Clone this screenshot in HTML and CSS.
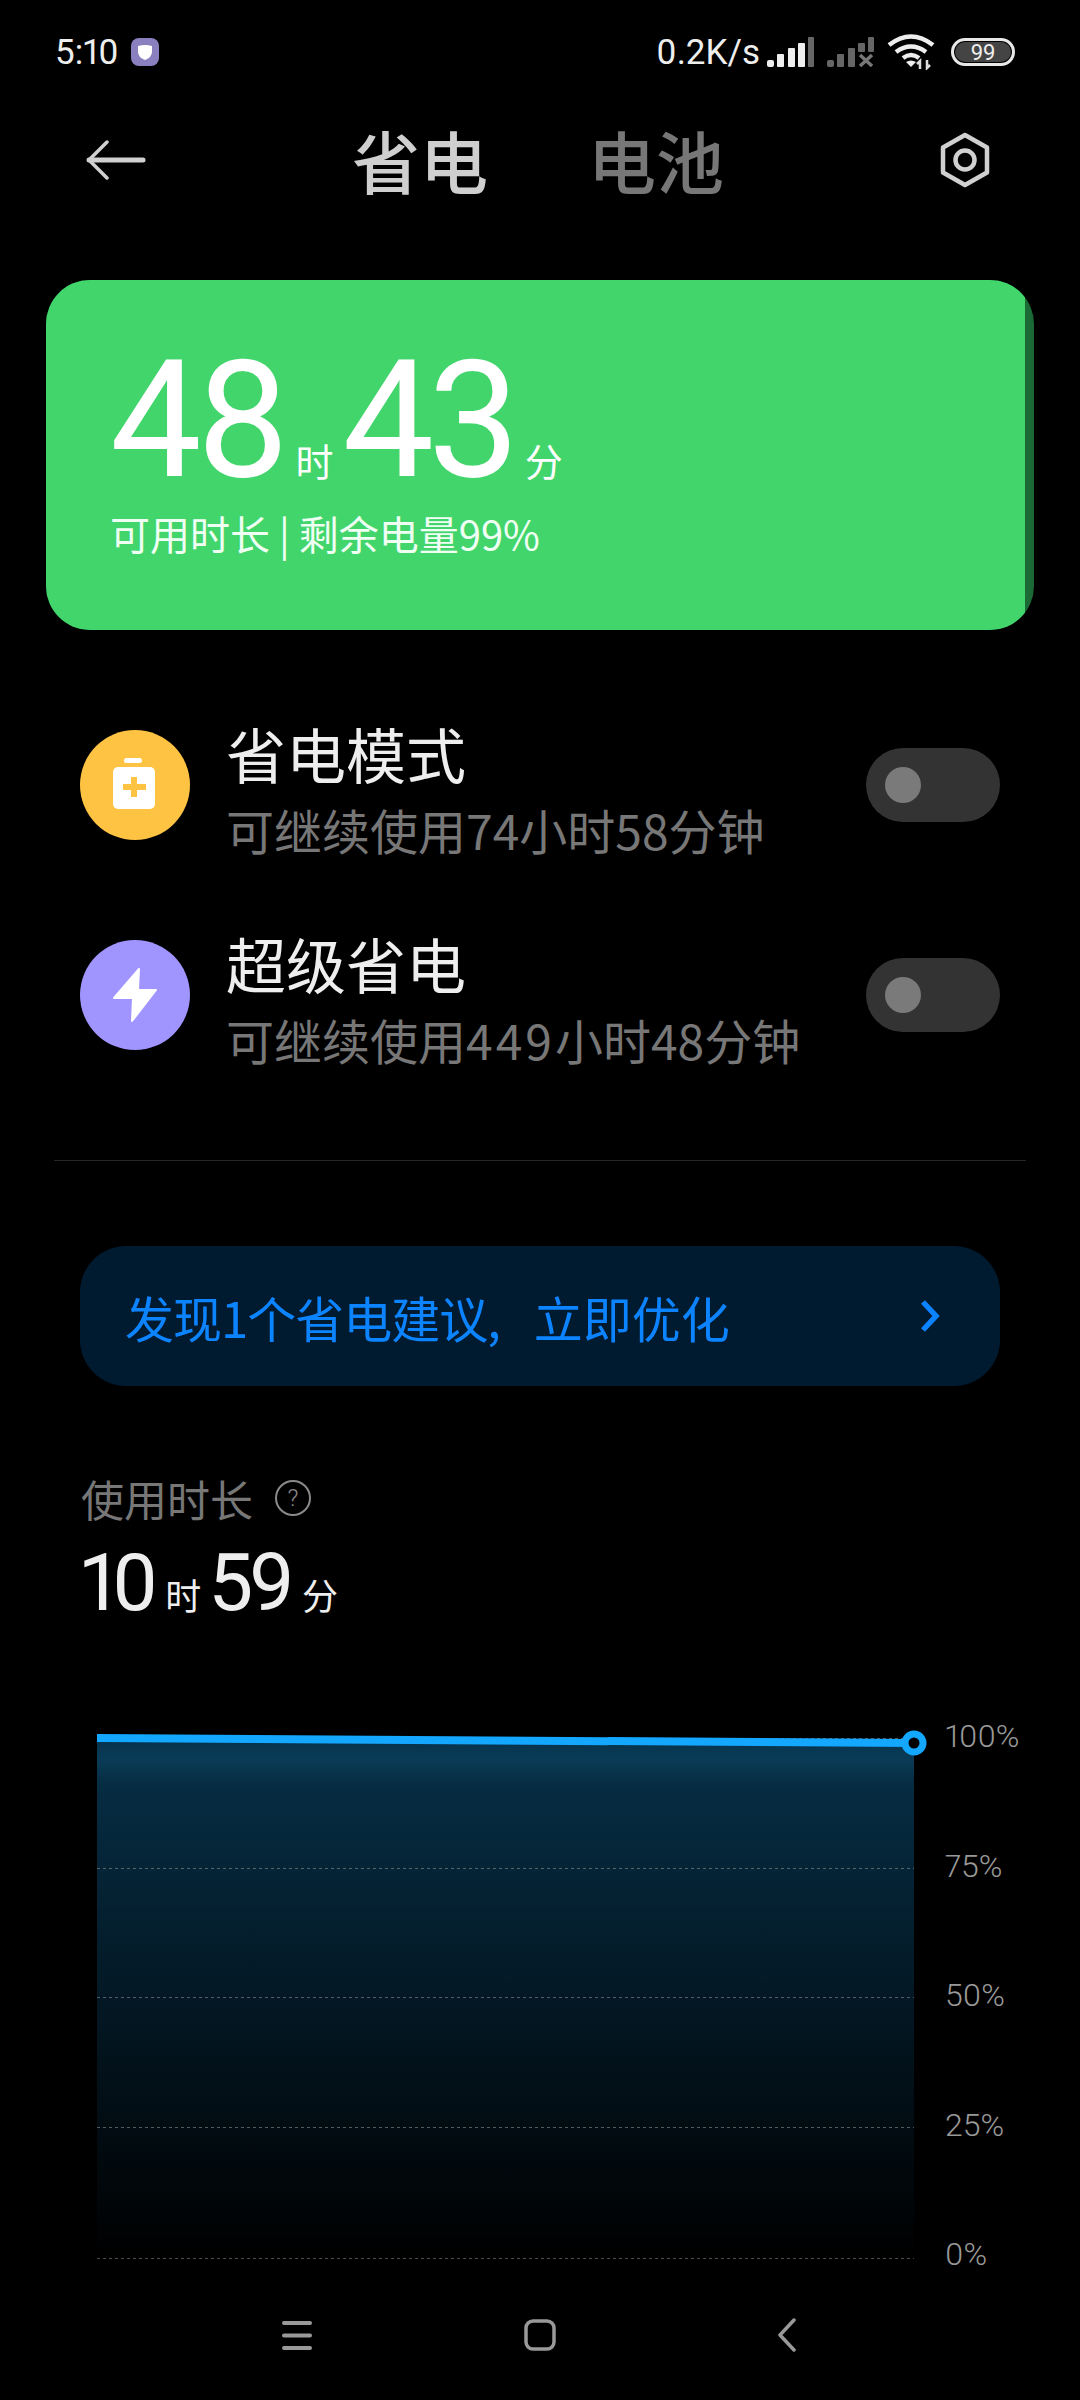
FILE: index.html
```html
<!DOCTYPE html>
<html lang="zh">
<head>
    <title>省电</title>
    <link rel="stylesheet" href="styles.css">
</head>
<body>
    <div class="status-bar">
        <div class="status-left">
            <span class="time">5:10</span>
            <svg class="notify" width="28" height="28" viewBox="0 0 28 28">
                <rect width="28" height="28" rx="8" fill="#8b80bf"/>
                <path d="M7 8q7-2 14 0v6q0 5-7 8q-7-3-7-8z" fill="#fff"/>
            </svg>
        </div>
        <div class="status-right">
            <span class="speed">0.2K/s</span>
            <svg class="signal" width="48" height="30" viewBox="0 0 48 30">
                <rect x="0" y="23" width="7" height="7" rx="2" fill="#eee"/>
                <rect x="10" y="17" width="7" height="13" rx="1" fill="#eee"/>
                <rect x="21" y="11" width="7" height="19" rx="1" fill="#eee"/>
                <rect x="31" y="6" width="7" height="24" rx="1" fill="#eee"/>
                <rect x="41" y="0" width="6" height="30" rx="1" fill="#666"/>
            </svg>
            <svg class="signal-off" width="48" height="30" viewBox="0 0 48 30">
                <rect x="0" y="23" width="7" height="7" rx="2" fill="#666"/>
                <rect x="10" y="17" width="7" height="13" rx="1" fill="#666"/>
                <rect x="21" y="11" width="7" height="19" rx="1" fill="#666"/>
                <rect x="31" y="6" width="7" height="9" rx="1" fill="#666"/>
                <rect x="41" y="0" width="6" height="15" rx="1" fill="#666"/>
                <path d="M33 18l12 11M45 18l-12 11" stroke="#777" stroke-width="3.5"/>
            </svg>
            <svg class="wifi" width="48" height="36" viewBox="0 0 48 36">
                <path d="M2 11q22-17 44 0M9 18q15-11 30 0M16 24q8-6 16 0" fill="none" stroke="#eee" stroke-width="4.5"/>
                <path d="M19 28q5-3 10 0l-5 5z" fill="#eee"/>
                <path d="M33 35v-8l-3 3M40 26v8l3-3" fill="none" stroke="#ddd" stroke-width="2.5"/>
            </svg>
            <div class="battery"><span>99</span></div>
        </div>
    </div>

    <div class="top-bar">
        <svg class="back" width="60" height="40" viewBox="0 0 60 40">
            <path d="M57 20H3" fill="none" stroke="#d0d0d0" stroke-width="5" stroke-linecap="round"/>
            <path d="M21 2L3 20l18 18" fill="none" stroke="#d0d0d0" stroke-width="3.500" stroke-linecap="round" stroke-linejoin="round"/>
        </svg>
        <div class="tabs">
            <span class="tab active">省电</span>
            <span class="tab">电池</span>
        </div>
        <svg class="gear" width="50" height="56" viewBox="0 0 50 56">
            <path d="M25 3l22 12.500v25L25 53 3 40.500v-25z" fill="none" stroke="#d0d0d0" stroke-width="4.500" stroke-linejoin="round"/>
            <circle cx="25" cy="28" r="9.500" fill="none" stroke="#d0d0d0" stroke-width="4.500"/>
        </svg>
    </div>

    <div class="card">
        <div class="card-fill">
            <div class="big-time">
                <span class="num">48</span><span class="unit">时</span><span class="num">43</span><span class="unit">分</span>
            </div>
            <div class="card-sub">可用时长 | 剩余电量99%</div>
        </div>
    </div>

    <div class="mode-list">
        <div class="mode">
            <div class="mode-icon yellow">
                <svg width="46" height="54" viewBox="0 0 46 54">
                    <rect x="12" y="0" width="18" height="5" rx="2.500" fill="#fff"/>
                    <rect x="1" y="9" width="42" height="42" rx="5" fill="#fff"/>
                    <path d="M22 19v20M11 29h23" stroke="#ffc343" stroke-width="6"/>
                </svg>
            </div>
            <div class="mode-text">
                <div class="mode-title">省电模式</div>
                <div class="mode-sub">可继续使用74小时58分钟</div>
            </div>
            <div class="toggle"><div class="knob"></div></div>
        </div>
        <div class="mode">
            <div class="mode-icon purple">
                <svg width="44" height="54" viewBox="0 0 44 54">
                    <path d="M26 1L1 30h19l-1 23 24-31H25z" fill="#fff" stroke="#fff" stroke-width="2" stroke-linejoin="round"/>
                </svg>
            </div>
            <div class="mode-text">
                <div class="mode-title">超级省电</div>
                <div class="mode-sub">可继续使用<span class="wide">449</span>小时48分钟</div>
            </div>
            <div class="toggle"><div class="knob"></div></div>
        </div>
    </div>

    <div class="divider"></div>

    <div class="banner">
        <span class="banner-text"><span class="banner-lead">发现1个省电建议,</span> 立即优化</span>
        <svg width="20" height="34" viewBox="0 0 20 34">
            <path d="M3 3l13 14L3 31" fill="none" stroke="#0d84ff" stroke-width="5.500"/>
        </svg>
    </div>

    <div class="usage">
        <div class="usage-label">
            <span>使用时长</span>
            <span class="help">?</span>
        </div>
        <div class="usage-time">
            <span class="usage-num">10</span><span class="usage-unit">时</span><span class="usage-num">59</span><span class="usage-unit">分</span>
        </div>
    </div>

    <div class="chart">
        <svg class="plot" width="830" height="560" viewBox="0 0 830 560">
            <defs>
                <linearGradient id="fade" x1="0" y1="0" x2="0" y2="1">
                    <stop offset="0" stop-color="#05304a"/>
                    <stop offset="0.04" stop-color="#0a3c57"/>
                    <stop offset="0.09" stop-color="#062c42"/>
                    <stop offset="1" stop-color="#000"/>
                </linearGradient>
            </defs>
            <path d="M0 25L817 30V545H0z" fill="url(#fade)"/>
            <g stroke="#9a9a9a" stroke-width="1" stroke-dasharray="3 3" opacity="0.55">
                <path d="M0 25.500H817"/>
                <path d="M0 155.500H817"/>
                <path d="M0 284.500H817"/>
                <path d="M0 414.500H817"/>
                <path d="M0 545.500H817" opacity="0.9"/>
            </g>
            <path d="M0 25L817 30" stroke="#14a7ff" stroke-width="8"/>
            <circle cx="817" cy="30" r="9" fill="#000" stroke="#14a7ff" stroke-width="7"/>
        </svg>
        <div class="axis">
            <span>100%</span>
            <span>75%</span>
            <span>50%</span>
            <span>25%</span>
            <span>0%</span>
        </div>
    </div>

    <div class="nav-bar">
        <svg width="30" height="30" viewBox="0 0 30 30">
            <path d="M2 3h26M2 15.500h26M2 28h26" stroke="#999" stroke-width="4" stroke-linecap="round"/>
        </svg>
        <svg width="32" height="32" viewBox="0 0 32 32">
            <rect x="2" y="2" width="28" height="28" rx="7" fill="none" stroke="#999" stroke-width="3.500"/>
        </svg>
        <svg width="30" height="34" viewBox="0 0 30 34">
            <path d="M26 2L12 17l14 15" fill="none" stroke="#999" stroke-width="3.500" stroke-linecap="round" stroke-linejoin="round"/>
        </svg>
    </div>
</body>
</html>
```

FILE: styles.css
```css
* {
    box-sizing: border-box;
}

body {
    margin: 0;
    width: 1080px;
    height: 2400px;
    overflow: hidden;
    background-color: #000;
    font-family: "Noto Sans CJK SC", Roboto, sans-serif;
    color: #eee;
}

/* status bar */
.status-bar {
    display: flex;
    justify-content: space-between;
    align-items: center;
    height: 104px;
    padding: 0 65px 0 55px;
}

.status-left,
.status-right {
    display: flex;
    align-items: center;
}

.time,
.speed {
    font-family: Roboto, sans-serif;
    font-size: 35px;
    font-weight: 400;
    font-variant-numeric: proportional-nums;
    color: #eee;
}

.notify {
    margin-left: 12px;
}

.signal {
    margin-left: 7px;
}

.signal-off,
.wifi {
    margin-left: 12px;
}

.battery {
    display: flex;
    align-items: center;
    justify-content: center;
    width: 64px;
    height: 28px;
    margin-left: 16px;
    border: 3px solid #e8e8e8;
    border-radius: 14px;
    background-color: #444;
    box-shadow: inset 0 0 0 1px #000;
    font-family: Roboto, sans-serif;
    font-size: 22px;
    color: #eee;
}

/* tabs */
.top-bar {
    display: flex;
    align-items: center;
    height: 72px;
    margin-top: 20px;
    padding: 0 90px 0 86px;
}

.tabs {
    display: flex;
    gap: 100px;
    margin-left: 206px;
}

.tab {
    font-size: 68px;
    line-height: 72px;
    font-weight: 500;
    color: #777;
}

.tab.active {
    color: #cfcfcf;
}

.gear {
    margin-left: auto;
}

/* battery card */
.card {
    width: 988px;
    height: 350px;
    margin: 84px 0 0 46px;
    border-radius: 44px;
    background-color: #1b6a35;
    overflow: hidden;
}

.card-fill {
    width: 979px;
    height: 100%;
    padding: 61px 0 0 64px;
    background-color: #42d56c;
    color: #fff;
}

.big-time {
    display: flex;
    align-items: baseline;
    height: 160px;
}

.num {
    font-family: Roboto, sans-serif;
    font-size: 163px;
    line-height: 160px;
    font-weight: 400;
    font-variant-numeric: proportional-nums;
    letter-spacing: -6px;
}

.unit {
    margin: 0 9px 0 11px;
    font-size: 38px;
    line-height: 50px;
}

.card-sub {
    margin-top: 7px;
    font-size: 40px;
    line-height: 50px;
    color: #effff3;
}

/* modes */
.mode-list {
    margin-top: 81px;
    padding: 0 80px;
}

.mode {
    display: flex;
    align-items: center;
    margin-bottom: 62px;
}

.mode-icon {
    display: flex;
    align-items: center;
    justify-content: center;
    flex: none;
    width: 110px;
    height: 110px;
    border-radius: 50%;
}

.yellow {
    background-color: #ffc343;
}

.purple {
    background-color: #a095ff;
}

.mode-text {
    flex: 1;
    margin: 10px 0 0 36px;
}

.mode-title {
    font-size: 60px;
    line-height: 64px;
    color: #eee;
}

.mode-sub {
    margin-top: 14px;
    font-size: 48px;
    line-height: 60px;
    color: #777;
}

.wide {
    letter-spacing: 3px;
}

.toggle {
    display: flex;
    align-items: center;
    flex: none;
    width: 134px;
    height: 74px;
    padding-left: 19px;
    border-radius: 37px;
    background-color: #333;
}

.knob {
    width: 36px;
    height: 36px;
    border-radius: 50%;
    background-color: #7a7a7a;
}

.divider {
    height: 1px;
    margin: 91px 54px 0;
    background-color: #262626;
}

/* suggestion banner */
.banner {
    display: flex;
    align-items: center;
    justify-content: space-between;
    width: 920px;
    height: 140px;
    margin: 85px 0 0 80px;
    padding: 0 60px 0 45px;
    border-radius: 46px;
    background-color: #001a30;
}

.banner-text {
    font-size: 49px;
    word-spacing: 23px;
    color: #0d84ff;
}

.banner-lead {
    letter-spacing: -1px;
}

/* usage */
.usage {
    margin: 86px 0 0 81px;
}

.usage-label {
    display: flex;
    align-items: center;
    height: 52px;
    font-size: 43px;
    color: #777;
}

.help {
    display: flex;
    align-items: center;
    justify-content: center;
    width: 36px;
    height: 36px;
    margin-left: 22px;
    border: 2px solid #8a8a8a;
    border-radius: 50%;
    font-family: Roboto, sans-serif;
    font-size: 24px;
    font-weight: 300;
    color: #8a8a8a;
}

.usage-time {
    display: flex;
    align-items: baseline;
    height: 90px;
    margin-top: 14px;
}

.usage-num {
    font-family: Roboto, sans-serif;
    font-size: 80px;
    line-height: 90px;
    font-variant-numeric: proportional-nums;
    letter-spacing: -4px;
}

.usage-unit {
    margin: 0 7px 0 11px;
    font-size: 36px;
    line-height: 50px;
}

/* chart */
.chart {
    display: flex;
    height: 560px;
    margin: 85px 0 0 97px;
}

.plot {
    flex: none;
}

.axis {
    display: flex;
    flex-direction: column;
    gap: 89.5px;
    margin-left: 18px;
    padding-top: 3px;
    font-family: Roboto, sans-serif;
    font-size: 32px;
    line-height: 40px;
    font-weight: 300;
    font-variant-numeric: proportional-nums;
    color: #999;
}

/* nav */
.nav-bar {
    display: flex;
    align-items: center;
    gap: 212px;
    margin: 45px 0 0 282px;
}
```
